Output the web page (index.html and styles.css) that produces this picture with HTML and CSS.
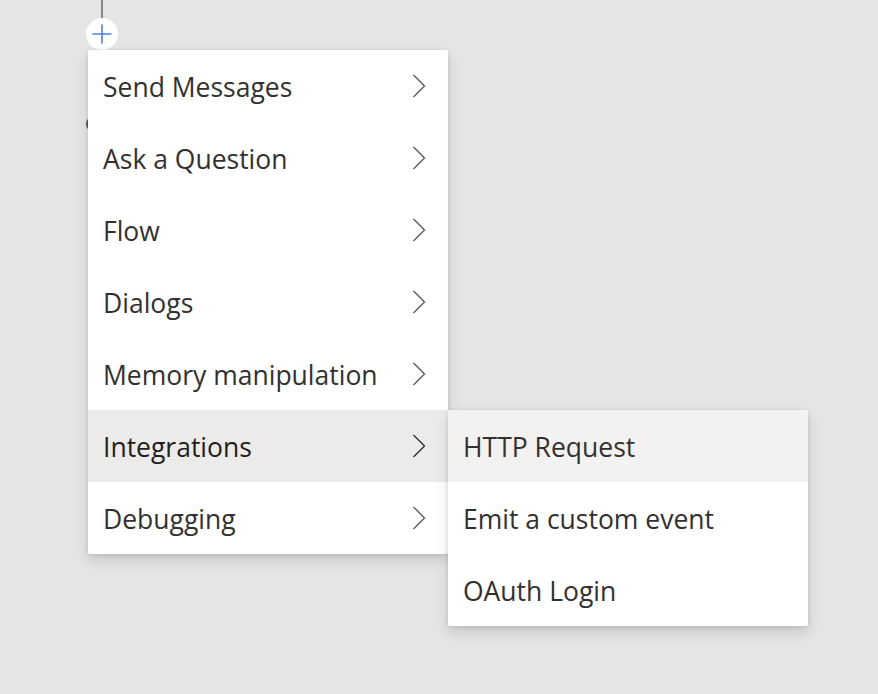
FILE: index.html
```html
<!DOCTYPE html>
<html>
<head>
<meta charset="utf-8">
<link rel="stylesheet" href="styles.css">
</head>
<body>
<div class="canvas">
  <div class="edge"></div>
  <div class="node-dot"></div>
  <div class="add-btn">
    <svg width="22" height="22" viewBox="0 0 22 22"><path d="M11 1.5V20.5M1.5 11H20.5" stroke="#4f7fe0" stroke-width="1.6" fill="none"/></svg>
  </div>
  <div class="menu main-menu">
    <div class="item"><span>Send Messages</span><svg class="chev" width="14" height="24" viewBox="0 0 14 24"><path d="M1.5 1L12.5 12L1.5 23" stroke="#605e5c" stroke-width="1.4" fill="none"/></svg></div>
    <div class="item"><span>Ask a Question</span><svg class="chev" width="14" height="24" viewBox="0 0 14 24"><path d="M1.5 1L12.5 12L1.5 23" stroke="#605e5c" stroke-width="1.4" fill="none"/></svg></div>
    <div class="item"><span>Flow</span><svg class="chev" width="14" height="24" viewBox="0 0 14 24"><path d="M1.5 1L12.5 12L1.5 23" stroke="#605e5c" stroke-width="1.4" fill="none"/></svg></div>
    <div class="item"><span>Dialogs</span><svg class="chev" width="14" height="24" viewBox="0 0 14 24"><path d="M1.5 1L12.5 12L1.5 23" stroke="#605e5c" stroke-width="1.4" fill="none"/></svg></div>
    <div class="item"><span>Memory manipulation</span><svg class="chev" width="14" height="24" viewBox="0 0 14 24"><path d="M1.5 1L12.5 12L1.5 23" stroke="#605e5c" stroke-width="1.4" fill="none"/></svg></div>
    <div class="item active"><span>Integrations</span><svg class="chev" width="14" height="24" viewBox="0 0 14 24"><path d="M1.5 1L12.5 12L1.5 23" stroke="#323130" stroke-width="1.4" fill="none"/></svg></div>
    <div class="item"><span>Debugging</span><svg class="chev" width="14" height="24" viewBox="0 0 14 24"><path d="M1.5 1L12.5 12L1.5 23" stroke="#605e5c" stroke-width="1.4" fill="none"/></svg></div>
  </div>
  <div class="menu sub-menu">
    <div class="item hover"><span>HTTP Request</span></div>
    <div class="item"><span>Emit a custom event</span></div>
    <div class="item"><span>OAuth Login</span></div>
  </div>
</div>
</body>
</html>
```
FILE: styles.css
```css
html, body {
  margin: 0;
  padding: 0;
  width: 878px;
  height: 694px;
  overflow: hidden;
  background: #e5e5e5;
  font-family: "Open Sans", "Noto Sans", sans-serif;
}
.canvas {
  position: relative;
  width: 878px;
  height: 694px;
}
.edge {
  position: absolute;
  left: 101px;
  top: 0;
  width: 2px;
  height: 20px;
  background: #8a8886;
}
.node-dot {
  position: absolute;
  left: 86px;
  top: 115px;
  width: 18px;
  height: 18px;
  border-radius: 50%;
  background: #605e5c;
}
.add-btn {
  position: absolute;
  left: 86px;
  top: 18px;
  width: 32px;
  height: 32px;
  border-radius: 50%;
  background: #fff;
  display: flex;
  align-items: center;
  justify-content: center;
}
.menu {
  position: absolute;
  background: #fff;
  width: 360px;
  border-radius: 2px;
  box-shadow: 0 6px 14px rgba(0,0,0,0.13), 0 1px 4px rgba(0,0,0,0.11);
  display: flex;
  flex-direction: column;
}
.main-menu {
  left: 88px;
  top: 50px;
}
.sub-menu {
  left: 448px;
  top: 410px;
}
.item {
  height: 72px;
  display: flex;
  align-items: center;
  justify-content: space-between;
  padding: 0 22px 0 15px;
  font-size: 26.5px;
  color: #323130;
}
.item span {
  position: relative;
  top: 1px;
}
.item.active {
  background: #edebe9;
  color: #201f1e;
}
.item.hover {
  background: #f3f2f1;
}
.chev {
  display: block;
}
```
